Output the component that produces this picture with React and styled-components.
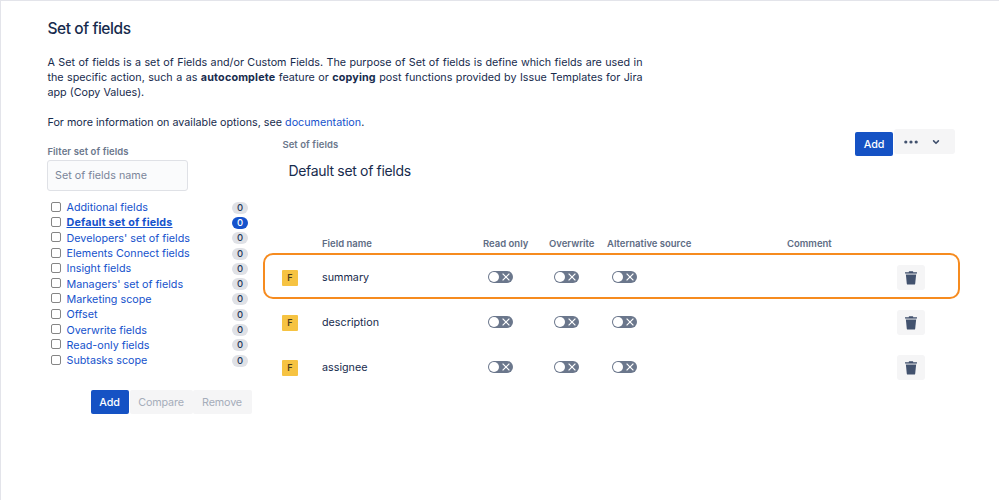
import React from 'react'
import styled, { createGlobalStyle } from 'styled-components';

const sets = [
    'Additional fields',
    'Default set of fields',
    "Developers' set of fields",
    'Elements Connect fields',
    'Insight fields',
    "Managers' set of fields",
    'Marketing scope',
    'Offset',
    'Overwrite fields',
    'Read-only fields',
    'Subtasks scope',
];

const fields = ['summary', 'description', 'assignee'];

const Switch = () => (
    <Toggle type="button" role="switch" aria-checked="false">
        <Knob />
        <svg width="8" height="8" viewBox="0 0 8 8" fill="none" stroke="#fff" strokeWidth="1.2">
            <path d="M0.6 0.6L7.4 7.4M7.4 0.6L0.6 7.4" />
        </svg>
    </Toggle>
)

const TrashIcon = () => (
    <svg width="14" height="14" viewBox="0 0 14 14" fill="#42526e">
        <path d="M1 1.3h3.8V.8c0-.3.2-.5.5-.5h3.4c.3 0 .5.2.5.5v.5H13v1.3H1z" />
        <path d="M1.7 2.6h10.6l-.1 1.2H1.800z" opacity="0.4" />
        <path d="M1.9 3.7h10.2l-.9 9c-.1.6-.4.9-1 .9H3.800c-.6 0-.9-.3-1-.9z" />
    </svg>
)

const App = () => {
    return (
        <Page>
            <GlobalStyle />
            <Title>Set of fields</Title>
            <Intro>
                A Set of fields is a set of Fields and/or Custom Fields. The purpose of Set of fields is define which fields are used in the specific action, such a as <b>autocomplete</b> feature or <b>copying</b> post functions provided by Issue Templates for Jira app (Copy Values).
            </Intro>
            <More>For more information on available options, see <a href="#documentation">documentation</a>.</More>
            <Columns>
                <Sidebar>
                    <Label>Filter set of fields</Label>
                    <Search placeholder="Set of fields name" />
                    <List>
                        {sets.map((name, i) => (
                            <Item key={name}>
                                <Check type="checkbox" />
                                <SetLink href="#set" $active={i === 1}>{name}</SetLink>
                                <Count $active={i === 1}>0</Count>
                            </Item>
                        ))}
                    </List>
                    <Actions>
                        <Button $primary>Add</Button>
                        <Button disabled $width="63px">Compare</Button>
                        <Button disabled $width="59px">Remove</Button>
                    </Actions>
                </Sidebar>
                <Main>
                    <MainHead>
                        <div>
                            <Label>Set of fields</Label>
                            <SetName>Default set of fields</SetName>
                        </div>
                        <Toolbar>
                            <Button $primary>Add</Button>
                            <MenuButton type="button">
                                <svg width="14" height="4" viewBox="0 0 14 4" fill="#42526e">
                                    <circle cx="1.8" cy="2" r="1.6" />
                                    <circle cx="7" cy="2" r="1.6" />
                                    <circle cx="12.2" cy="2" r="1.6" />
                                </svg>
                                <svg width="8" height="6" viewBox="0 0 8 6" fill="none" stroke="#42526e" strokeWidth="1.6" strokeLinecap="round" strokeLinejoin="round">
                                    <path d="M1.6 1.9L4 4.300L6.400 1.9" />
                                </svg>
                            </MenuButton>
                        </Toolbar>
                    </MainHead>
                    <HeadRow>
                        <span />
                        <span>Field name</span>
                        <span>Read only</span>
                        <span>Overwrite</span>
                        <span>Alternative source</span>
                        <span>Comment</span>
                    </HeadRow>
                    {fields.map((name, i) => (
                        <FieldRow key={name} $highlight={i === 0}>
                            <Badge>F</Badge>
                            <span>{name}</span>
                            <Switch />
                            <Switch />
                            <Switch />
                            <span />
                            <Delete type="button"><TrashIcon /></Delete>
                        </FieldRow>
                    ))}
                </Main>
            </Columns>
        </Page>
    )
}

const GlobalStyle = createGlobalStyle`
    * {
        box-sizing: border-box;
    }
    body {
        margin: 0;
        overflow: hidden;
        background: #fff;
    }
    button, input {
        font-family: inherit;
    }
`;

const Page = styled.div`
    width: 999px;
    height: 500px;
    padding: 19px 0 0 46px;
    border-top: 1px solid #e3e4ea;
    border-left: 1px solid #e3e4ea;
    color: #172b4d;
    font-family: Inter, "Liberation Sans", sans-serif;
    font-size: 10.75px;
    line-height: 15px;
    a {
        color: #1552cc;
        text-decoration: none;
    }
    b {
        letter-spacing: 0.17px;
    }
`;

const Title = styled.h1`
    margin: 0 0 0 0.5px;
    font-size: 15.5px;
    line-height: 18px;
    font-weight: 500;
    letter-spacing: -0.43px;
`;

const Intro = styled.p`
    width: 595px;
    margin: 17px 0 0 0.5px;
    text-align: justify;
`;

const More = styled.p`
    margin: 15px 0 0 0.5px;
`;

const Columns = styled.div`
    display: flex;
`;

const Sidebar = styled.div`
    width: 205px;
    padding-top: 15px;
`;

const Label = styled.div`
    margin-left: 0.4px;
    color: #6b778c;
    font-size: 9.5px;
    line-height: 14px;
    font-weight: 600;
    letter-spacing: 0.08px;
`;

const Search = styled.input`
    display: block;
    width: 141px;
    height: 31px;
    margin-top: 1px;
    padding: 0 7px;
    border: 1px solid #dfe1e6;
    border-radius: 3px;
    background: #fafbfc;
    font-size: 10.75px;
    &::placeholder {
        color: #7a869a;
    }
`;

const List = styled.ul`
    margin: 9px 0 0;
    padding: 0;
    list-style: none;
`;

const Item = styled.li`
    display: flex;
    align-items: center;
    height: 15.3px;
    padding: 0 4px;
`;

const Check = styled.input`
    appearance: none;
    width: 10px;
    height: 10px;
    margin: -2px 5.5px 0 0;
    border: 1px solid #858585;
    border-radius: 2px;
    background: #fff;
`;

const SetLink = styled.a`
    flex: 1;
    font-weight: ${({ $active }) => ($active ? 700 : 400)};
    letter-spacing: ${({ $active }) => ($active ? '0.17px' : '0')};
    && {
        text-decoration: ${({ $active }) => ($active ? 'underline' : 'none')};
    }
`;

const Count = styled.span`
    width: 16px;
    height: 12px;
    border-radius: 6px;
    background: ${({ $active }) => ($active ? '#1552cc' : '#dfe1e6')};
    color: ${({ $active }) => ($active ? '#fff' : '#253858')};
    font-size: 9.5px;
    line-height: 12px;
    font-weight: 500;
    text-align: center;
`;

const Actions = styled.div`
    display: flex;
    margin: 22px 0 0 43.5px;
`;

const Button = styled.button`
    flex: none;
    width: ${({ $width }) => $width || '38px'};
    height: 24px;
    margin-right: ${({ $primary }) => ($primary ? '1px' : '0')};
    padding: 0;
    border: 0;
    border-radius: 2px;
    background: ${({ $primary }) => ($primary ? '#1552c4' : '#f5f5f6')};
    color: ${({ $primary }) => ($primary ? '#fff' : '#a5adba')};
    font-size: 10.75px;
    font-weight: ${({ $primary }) => ($primary ? 500 : 400)};
    letter-spacing: -0.15px;
`;

const Main = styled.main`
    width: 697px;
    margin-left: 11px;
`;

const MainHead = styled.div`
    display: flex;
    justify-content: space-between;
    height: 105px;
    padding: 8px 5px 0 19px;
`;

const SetName = styled.h2`
    margin: 10px 0 0 6.5px;
    font-size: 14px;
    line-height: 18px;
    font-weight: 400;
    letter-spacing: -0.33px;
`;

const Toolbar = styled.div`
    display: flex;
    align-items: flex-end;
    height: 27px;
    margin-top: -9px;
`;

const MenuButton = styled.button`
    display: flex;
    align-items: center;
    align-self: flex-start;
    gap: 14px;
    width: 61px;
    height: 25px;
    padding: 0 0 0 10px;
    border: 0;
    border-radius: 3px;
    background: #f5f5f6;
`;

const Grid = styled.div`
    display: grid;
    grid-template-columns: 40px 161px 66px 58px 180px 110px 28px;
    align-items: center;
    padding-left: 19px;
`;

const HeadRow = styled(Grid)`
    height: 18px;
    padding-bottom: 2px;
    color: #5e6c84;
    font-size: 9.5px;
    font-weight: 600;
`;

const FieldRow = styled(Grid)`
    height: ${({ $highlight }) => ($highlight ? '46px' : '45px')};
    margin-bottom: ${({ $highlight }) => ($highlight ? '1px' : '0')};
    padding-top: ${({ $highlight }) => ($highlight ? '3px' : '0')};
    outline: ${({ $highlight }) => ($highlight ? '2px solid #f68b1f' : 'none')};
    outline-offset: -2px;
    border-radius: 10px;
`;

const Badge = styled.span`
    width: 16px;
    height: 16px;
    border-radius: 1px;
    background: #f6c342;
    color: #4a3c1c;
    font-size: 9px;
    line-height: 16px;
    font-weight: 600;
    text-align: center;
`;

const Toggle = styled.button`
    display: flex;
    align-items: center;
    justify-content: space-between;
    width: 25px;
    height: 12px;
    margin: 0 0 1px 5px;
    padding: 0 3px 0 1px;
    border: 0;
    border-radius: 6px;
    background: #6b778c;
`;

const Knob = styled.span`
    width: 10px;
    height: 10px;
    border-radius: 50%;
    background: #fff;
`;

const Delete = styled.button`
    display: flex;
    align-items: center;
    justify-content: center;
    width: 28px;
    height: 25px;
    padding: 0;
    border: 0;
    border-radius: 3px;
    background: #f5f5f6;
`;

export default App
